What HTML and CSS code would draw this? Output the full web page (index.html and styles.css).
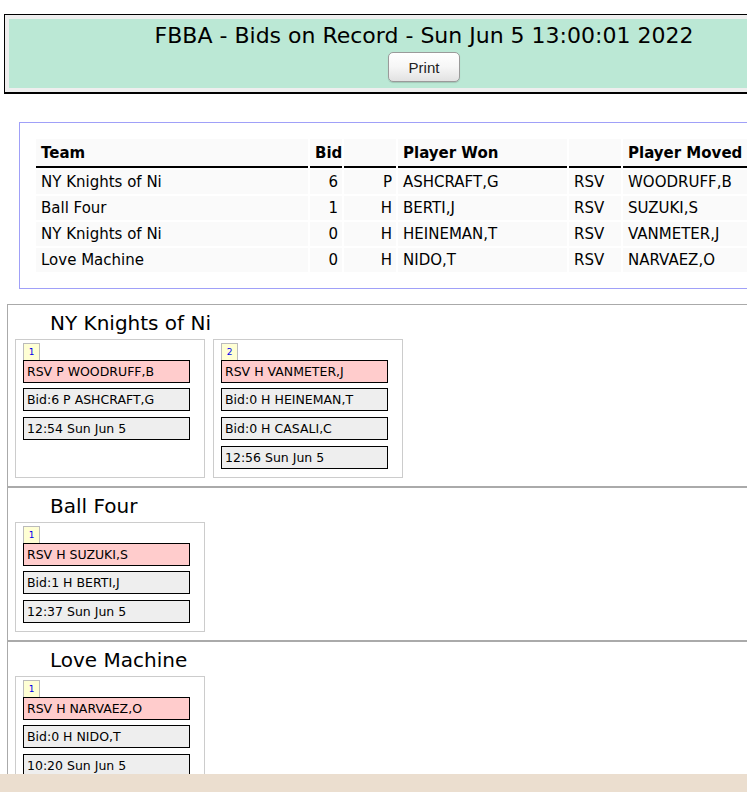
FILE: index.html
```html
<!DOCTYPE html>
<html>
<head>
<meta charset="utf-8">
<title>FBBA - Bids on Record</title>
<link rel="stylesheet" href="styles.css">
</head>
<body>
<div class="page">
  <div class="header">
    <h1 class="title">FBBA - Bids on Record - Sun Jun 5 13:00:01 2022</h1>
    <button class="print-btn" type="button">Print</button>
  </div>

  <div class="bids-box">
    <table class="bids">
      <thead>
        <tr>
          <th class="c-team">Team</th>
          <th class="c-bid num">Bid</th>
          <th class="c-pos"></th>
          <th class="c-won">Player Won</th>
          <th class="c-rsv"></th>
          <th class="c-moved">Player Moved</th>
        </tr>
      </thead>
      <tbody>
        <tr><td>NY Knights of Ni</td><td class="num">6</td><td class="num">P</td><td>ASHCRAFT,G</td><td class="rsv">RSV</td><td>WOODRUFF,B</td></tr>
        <tr><td>Ball Four</td><td class="num">1</td><td class="num">H</td><td>BERTI,J</td><td class="rsv">RSV</td><td>SUZUKI,S</td></tr>
        <tr><td>NY Knights of Ni</td><td class="num">0</td><td class="num">H</td><td>HEINEMAN,T</td><td class="rsv">RSV</td><td>VANMETER,J</td></tr>
        <tr><td>Love Machine</td><td class="num">0</td><td class="num">H</td><td>NIDO,T</td><td class="rsv">RSV</td><td>NARVAEZ,O</td></tr>
      </tbody>
    </table>
  </div>

  <div class="teams">
    <div class="team">
      <h2 class="team-name">NY Knights of Ni</h2>
      <div class="cards">
        <div class="card">
          <span class="tab">1</span>
          <div class="line moved">RSV P WOODRUFF,B</div>
          <div class="line">Bid:6 P ASHCRAFT,G</div>
          <div class="line">12:54 Sun Jun 5</div>
        </div>
        <div class="card">
          <span class="tab">2</span>
          <div class="line moved">RSV H VANMETER,J</div>
          <div class="line">Bid:0 H HEINEMAN,T</div>
          <div class="line">Bid:0 H CASALI,C</div>
          <div class="line">12:56 Sun Jun 5</div>
        </div>
      </div>
    </div>

    <div class="team">
      <h2 class="team-name">Ball Four</h2>
      <div class="cards">
        <div class="card">
          <span class="tab">1</span>
          <div class="line moved">RSV H SUZUKI,S</div>
          <div class="line">Bid:1 H BERTI,J</div>
          <div class="line">12:37 Sun Jun 5</div>
        </div>
      </div>
    </div>

    <div class="team">
      <h2 class="team-name">Love Machine</h2>
      <div class="cards">
        <div class="card">
          <span class="tab">1</span>
          <div class="line moved">RSV H NARVAEZ,O</div>
          <div class="line">Bid:0 H NIDO,T</div>
          <div class="line">10:20 Sun Jun 5</div>
        </div>
      </div>
    </div>
  </div>
</div>
<div class="footer"></div>
</body>
</html>
```
FILE: styles.css
```css
html {
  overflow: hidden;
}
body {
  margin: 0;
  padding: 14px 0 40px 4px;
  background: #fff;
  color: #000;
  font-family: "DejaVu Sans", Verdana, sans-serif;
}
.page {
  width: 840px;
}

/* header */
.header {
  border: solid #000;
  border-width: 1px 1px 2px 1px;
  background: #bbe8d5;
  box-shadow: inset 0 0 0 4px #eeeeee;
  padding: 7px 4px 10px;
  text-align: center;
}
.title {
  margin: 0;
  font-weight: normal;
  font-size: 22px;
  line-height: 27px;
}
.print-btn {
  display: block;
  margin: 3px auto 0;
  width: 72px;
  height: 30px;
  border: 1px solid #9a9a9a;
  border-radius: 5px;
  background: linear-gradient(#ffffff, #f6f6f6 50%, #e2e2e2);
  box-shadow: 0 1px 1px rgba(0, 0, 0, 0.15);
  font-family: "Liberation Sans Narrow", "Liberation Sans", Arial, sans-serif;
  font-size: 15px;
  color: #222;
  padding: 0;
}

/* bids table */
.bids-box {
  margin: 28px 0 0 15px;
  border: 1px solid #a0a0f8;
  padding: 14px 0 14px 14px;
}
.bids {
  border-spacing: 2px;
  table-layout: fixed;
  width: 788px;
  font-size: 15px;
}
.bids th,
.bids td {
  box-sizing: border-box;
  background: #fafafa;
  white-space: nowrap;
  overflow: hidden;
}
.bids th {
  text-align: left;
  font-weight: bold;
  border-bottom: 2px solid #000;
  padding: 5px 5px 3px;
  line-height: 19px;
}
.bids td {
  padding: 3px 5px;
  line-height: 18px;
}
.bids .num {
  text-align: right;
  padding-right: 4px;
}
.c-team { width: 272px; }
.c-bid { width: 32px; }
.c-pos { width: 52px; }
.c-won { width: 169px; }
.c-rsv { width: 52px; }
.c-moved { width: 200px; }

/* team sections */
.teams {
  margin: 15px 0 0 3px;
}
.team {
  border: 1px solid #aaaaaa;
  padding: 0 0 8px 7px;
}
.team-name {
  margin: 0 0 3px;
  padding: 6px 0 0 35px;
  font-weight: normal;
  font-size: 20px;
  line-height: 25px;
}
.cards {
  display: flex;
  gap: 8px;
  align-items: stretch;
}
.card {
  width: 167px;
  border: 1px solid #cccccc;
  padding: 3px 14px 8px 7px;
  font-size: 12.5px;
}
.tab {
  display: block;
  width: 15px;
  height: 16px;
  border: 1px solid #bbbbbb;
  border-bottom: none;
  background: #ffffd4;
  color: #0000ee;
  font-size: 9px;
  line-height: 17px;
  text-align: center;
}
.line {
  border: 1px solid #000;
  background: #eeeeee;
  height: 21px;
  line-height: 22px;
  padding: 0 3px;
  margin-bottom: 6px;
  white-space: nowrap;
}
.line.moved {
  background: #ffcccc;
  margin-bottom: 5px;
}
.card .line:last-child {
  margin-bottom: 0;
}

.footer {
  position: fixed;
  left: 0;
  right: 0;
  bottom: 0;
  height: 18px;
  background: #ebdecf;
}
```
